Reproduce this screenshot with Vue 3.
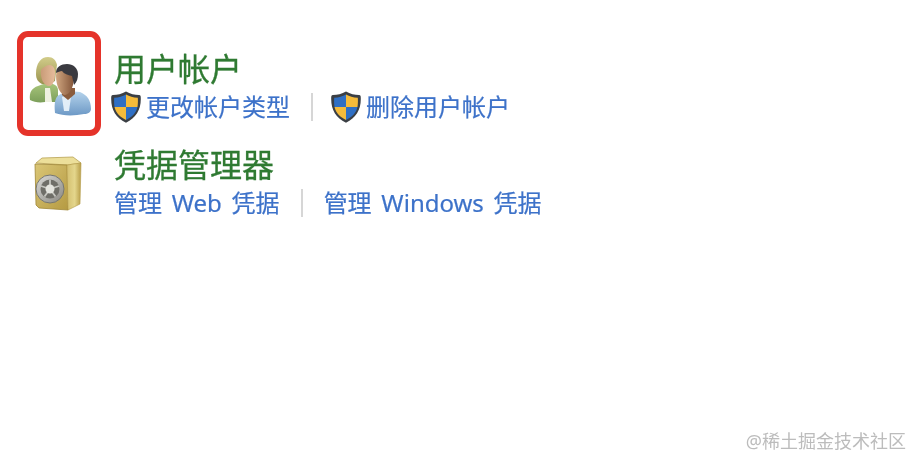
<script setup>
const rows = [
  {
    title: '用户帐户',
    icon: 'people',
    links: [
      { text: '更改帐户类型', shield: true },
      { text: '删除用户帐户', shield: true },
    ],
  },
  {
    title: '凭据管理器',
    icon: 'safe',
    links: [
      { text: '管理 Web 凭据', shield: false },
      { text: '管理 Windows 凭据', shield: false },
    ],
  },
]
</script>

<template>
  <div class="page">
    <div v-for="row in rows" :key="row.title" class="row">
      <div class="icon-cell">
        <template v-if="row.icon === 'people'">
          <svg class="people" width="64" height="62" viewBox="29 55 64 62">
            <defs>
              <linearGradient id="hairA" x1="0" y1="0" x2="0" y2="1">
                <stop offset="0" stop-color="#d2cc8a" />
                <stop offset="1" stop-color="#9a9450" />
              </linearGradient>
              <linearGradient id="skinA" x1="0" y1="0" x2="1" y2="0">
                <stop offset="0" stop-color="#c99c78" />
                <stop offset="1" stop-color="#e6bc9c" />
              </linearGradient>
              <linearGradient id="shirtA" x1="0" y1="0" x2="0" y2="1">
                <stop offset="0" stop-color="#a9c67c" />
                <stop offset="1" stop-color="#7c9f5a" />
              </linearGradient>
              <linearGradient id="shirtB" x1="0" y1="0" x2="0" y2="1">
                <stop offset="0" stop-color="#b6d4ec" />
                <stop offset="1" stop-color="#6d99c6" />
              </linearGradient>
              <linearGradient id="skinB" x1="0" y1="0" x2="1" y2="0">
                <stop offset="0" stop-color="#d0a680" />
                <stop offset="1" stop-color="#825438" />
              </linearGradient>
            </defs>
            <path d="M30 100c-1-8 2-12 8-14l8-3 7 1c3 1 5 3 5 6v12H45c-6 1-11 0-15-2z" fill="url(#shirtA)" />
            <path d="M45 88h5l2 14h-7z" fill="#eef0e0" />
            <path d="M36 74c0-11 5-17 12-17 5 0 8 3 9 8l-1 7-1 9-5 3h-8c-4-2-6-5-6-10z" fill="url(#hairA)" />
            <path d="M41 70c2-3 6-5 9-5 4 1 5 4 5 8 0 7-2 13-6 13-5 0-9-7-8-16z" fill="url(#skinA)" />
            <path d="M55 113c-1-11 0-17 6-19l8-3 11 1c7 3 11 8 11 17 0 3-3 5-7 5-10 2-21 2-29-1z" fill="url(#shirtB)" />
            <path d="M62 97l5-2 4 2-2 14h-5z" fill="#e2eef7" />
            <path d="M62 88h13v6l-7 6-6-5z" fill="#8a5c3c" />
            <path d="M56 76c0-6 4-11 9-11s9 5 9 11c0 9-3 18-9 19-5 0-9-10-9-19z" fill="url(#skinB)" />
            <path d="M56 73c0-6 5-9 11-9s11 4 11 10c0 4-1 8-4 11l-2-9c-4-1-8-2-10-5-2 0-4 1-6 2z" fill="#3a3a40" />
          </svg>
          <span class="frame"></span>
        </template>
        <svg v-else class="safe" width="50" height="58" viewBox="33 155 50 58">
          <defs>
            <linearGradient id="front" x1="0" y1="0" x2="1" y2="1">
              <stop offset="0" stop-color="#dac676" />
              <stop offset="1" stop-color="#b59a42" />
            </linearGradient>
            <linearGradient id="side" x1="0" y1="0" x2="1" y2="0">
              <stop offset="0" stop-color="#d4c070" />
              <stop offset=".55" stop-color="#e4d68c" />
              <stop offset="1" stop-color="#b89e48" />
            </linearGradient>
            <linearGradient id="dial" x1="0" y1="0" x2="1" y2="1">
              <stop offset="0" stop-color="#dadad6" />
              <stop offset="1" stop-color="#8a8882" />
            </linearGradient>
          </defs>
          <path d="M36 163l6-5 31-1 8 6-14 2z" fill="#ecdf9a" stroke="#b9a254" stroke-width=".8" />
          <path d="M35 164l32 1 1 45-29-2-3-3z" fill="url(#front)" stroke="#a08636" stroke-width=".8" />
          <path d="M67 165l14-2-1 41-12 6z" fill="url(#side)" stroke="#b39a48" stroke-width=".6" />
          <circle cx="50" cy="189" r="14" fill="url(#dial)" stroke="#77776f" />
          <circle cx="50" cy="189" r="9.500" fill="#6f6e68" />
          <g stroke="#c6c6c0" stroke-width="1.800">
            <path d="M50 189v-9.500" />
            <path d="M50 189l9-3" />
            <path d="M50 189l5.500 7.500" />
            <path d="M50 189l-5.500 7.500" />
            <path d="M50 189l-9-3" />
          </g>
          <circle cx="50" cy="189" r="4.500" fill="#e4e4de" />
        </svg>
      </div>
      <div class="body">
        <div class="title">{{ row.title }}</div>
        <div class="links">
          <template v-for="(link, i) in row.links" :key="link.text">
            <span v-if="i > 0" class="sep"></span>
            <a class="link">
              <svg v-if="link.shield" class="shield" width="30" height="32" viewBox="0 0 30 32">
                <path d="M15 .5c4 2.500 9 3.500 13 3.500 1.800 0 1.800 1.500 1.800 4 0 11-5 19-14.800 23.800C5 27 .2 19 .2 8c0-2.500 0-4 1.800-4 4 0 9-1 13-3.500z" fill="#3b3f44" />
                <path d="M15 3.500V16H3.500C3 12.500 3 9.500 3.200 6.800 8 6.500 11.500 5.500 15 3.500z" fill="#2f6fc4" />
                <path d="M15 3.500c3.500 2 7 3 11.800 3.300.2 2.700.2 5.700-.3 9.200H15z" fill="#f5bb3a" />
                <path d="M3.500 16H15v13C9 26 5 22 3.500 16z" fill="#f5bb3a" />
                <path d="M15 16h11.500C25 22 21 26 15 29z" fill="#2f6fc4" />
              </svg>
              <span>{{ link.text }}</span>
            </a>
          </template>
        </div>
      </div>
    </div>
    <div class="watermark">@稀土掘金技术社区</div>
  </div>
</template>

<style>
body {
  background: #fff;
}
</style>

<style scoped>
.page {
  position: relative;
  box-sizing: border-box;
  width: 912px;
  height: 458px;
  padding: 50px 0 0 29px;
  overflow: hidden;
  background: #fff;
  font-family: "Noto Sans", "Noto Sans CJK SC", sans-serif;
}

.row {
  display: flex;
  height: 76px;
  margin-bottom: 20px;
}

.icon-cell {
  position: relative;
  flex: 0 0 85px;
}

.people {
  display: block;
  margin-top: 5px;
  filter: blur(.7px);
}

.safe {
  display: block;
  margin: 9px 0 0 4px;
  filter: blur(.7px);
}

.frame {
  position: absolute;
  left: -12px;
  top: -19px;
  box-sizing: border-box;
  width: 84px;
  height: 105px;
  border: 6px solid #e5332a;
  border-radius: 11px;
}

.title {
  height: 38px;
  font-size: 32px;
  line-height: 38px;
  color: #2f7a32;
  -webkit-text-stroke: .3px #2f7a32;
  filter: blur(.5px);
}

.links {
  display: flex;
  align-items: center;
  height: 38px;
}

.link {
  display: flex;
  align-items: center;
  font-size: 24px;
  line-height: 38px;
  word-spacing: 3.5px;
  white-space: nowrap;
  color: #3d72c9;
  -webkit-text-stroke: .2px #3d72c9;
  filter: blur(.5px);
}

.shield {
  margin: 0 5px 0 -3px;
}

.sep {
  width: 2px;
  height: 28px;
  margin: 0 21px;
  background: #d6d6d6;
}

.watermark {
  position: absolute;
  right: 6px;
  bottom: 6px;
  font-size: 18px;
  line-height: 22px;
  color: #bcbcbc;
  filter: blur(.4px);
}
</style>
